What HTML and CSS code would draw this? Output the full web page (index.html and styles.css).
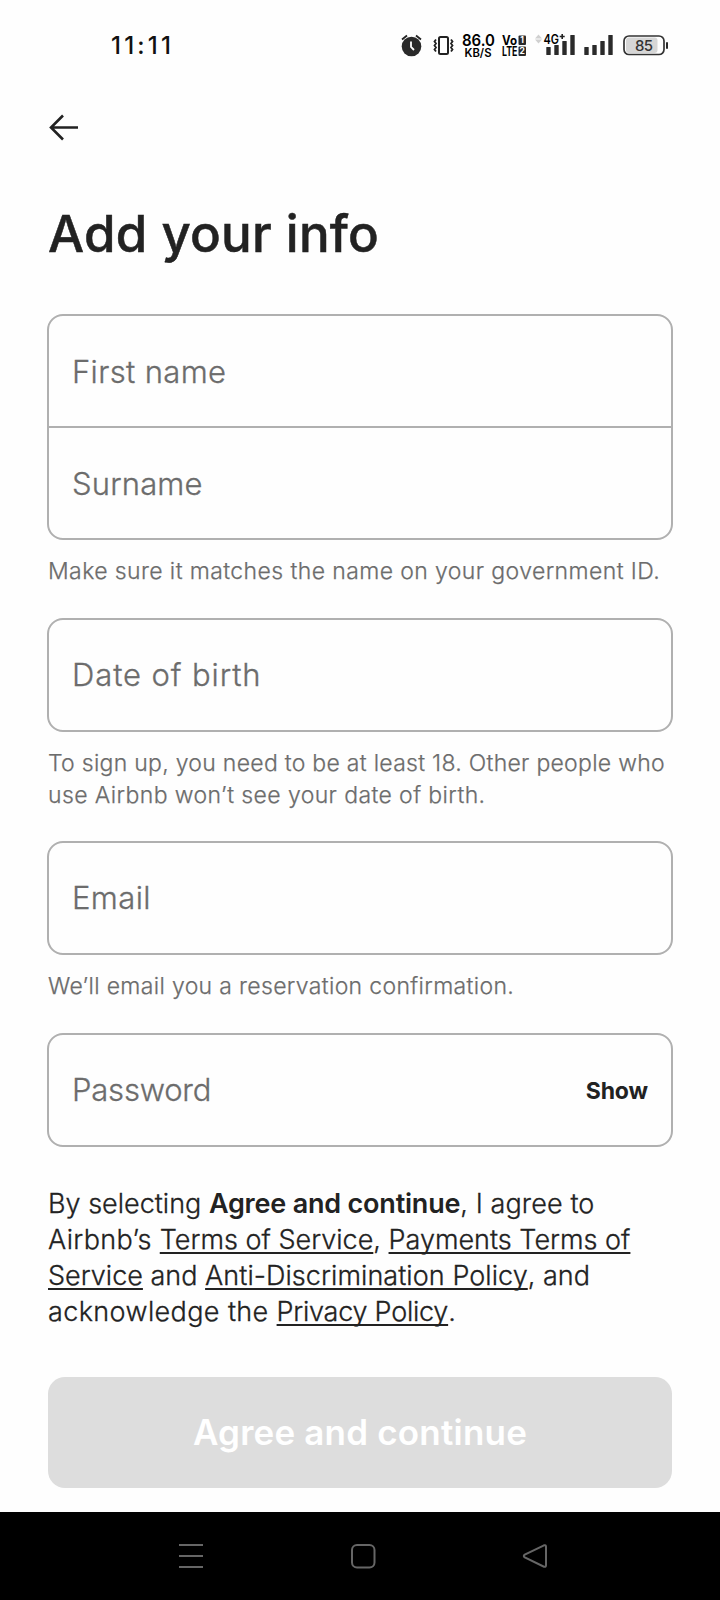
FILE: index.html
```html
<!DOCTYPE html>
<html lang="en">
<head>
<meta charset="utf-8">
<title>Add your info</title>
<link rel="stylesheet" href="styles.css">
</head>
<body>
<header class="status">
  <span class="clock">11:11</span>
  <svg class="status-icons" width="272" height="40" viewBox="398 25 272 40">
    <circle class="ink-fill" cx="411.500" cy="46.500" r="9.800"/>
    <path class="ink-line" stroke-width="1.800" d="M402 39.500l5-4M421 39.500l-5-4"/>
    <path d="M411 41.500v5.500l3 3" fill="none" stroke="#fff" stroke-width="1.800"/>
    <rect class="ink-line" stroke-width="2" x="439" y="37" width="9" height="17" rx="1.500"/>
    <path class="ink-line" stroke-width="1.800" d="M436 39.500l-1.500 2 1.500 2-1.500 2 1.500 2-1.500 2 1.500 2M451 39.500l1.500 2-1.500 2 1.500 2-1.500 2 1.500 2-1.500 2"/>
    <text class="rate" x="462" y="45.500" textLength="33" lengthAdjust="spacingAndGlyphs">86.0</text>
    <text class="unit" x="464.500" y="57" textLength="27" lengthAdjust="spacingAndGlyphs">KB/S</text>
    <text class="volte" x="502" y="45" textLength="15" lengthAdjust="spacingAndGlyphs">Vo</text>
    <text class="volte" x="502" y="55.500" textLength="15.500" lengthAdjust="spacingAndGlyphs">LTE</text>
    <rect class="ink-fill" x="518.500" y="35.500" width="7.500" height="9.500" rx="1"/>
    <rect class="ink-fill" x="518.500" y="46.500" width="7.500" height="9.500" rx="1"/>
    <text class="sim" x="520.300" y="43.400">1</text>
    <text class="sim" x="519.500" y="54.300">2</text>
    <path d="M538.500 34.500l3.500 4h-7zM538.500 43.500l3.500-4h-7z" fill="#d0d0d0"/>
    <text class="net" x="543.500" y="43.500" textLength="15.500" lengthAdjust="spacingAndGlyphs">4G</text>
    <path class="ink-line" stroke-width="1.600" d="M559.700 36.500h5M562.200 34v5"/>
    <g class="ink-fill">
      <rect x="546.300" y="47" width="4.400" height="8" rx=".5"/>
      <rect x="554.300" y="45" width="4.400" height="10" rx=".5"/>
      <rect x="562.300" y="41" width="4.400" height="14" rx=".5"/>
      <rect x="570.300" y="35" width="4.400" height="20" rx=".5"/>
      <rect x="584.300" y="47" width="4.400" height="8" rx=".5"/>
      <rect x="592.300" y="45" width="4.400" height="10" rx=".5"/>
      <rect x="600.300" y="41" width="4.400" height="14" rx=".5"/>
      <rect x="608.300" y="35" width="4.400" height="20" rx=".5"/>
      <rect x="666" y="42" width="2" height="7" rx="1"/>
    </g>
    <rect x="626" y="37.500" width="31.500" height="15.500" rx="3" fill="#d6d6d6"/>
    <rect x="624" y="36" width="40" height="18.500" rx="5" fill="none" stroke="#333" stroke-width="1.700"/>
    <text class="charge" x="635" y="51" textLength="18">85</text>
  </svg>
</header>
<main class="page">
  <button class="back" aria-label="Back">
    <svg width="30" height="28" viewBox="0 0 30 28"><path d="M29 14.500H2M14 2.500L2 14.500 14 26.500" fill="none" stroke="#222" stroke-width="2.600"/></svg>
  </button>
  <h1 class="title">Add your info</h1>

  <div class="box">
    <div class="field"><span class="ph first">First name</span></div>
    <div class="field"><span class="ph surname">Surname</span></div>
  </div>
  <p class="hint hint-name">Make sure it matches the name on your government ID.</p>

  <div class="box">
    <div class="field"><span class="ph birth">Date of birth</span></div>
  </div>
  <p class="hint hint-birth"><span class="line">To sign up, you need to be at least 18. Other people who</span> <span class="line looser">use Airbnb won’t see your date of birth.</span></p>

  <div class="box">
    <div class="field"><span class="ph email">Email</span></div>
  </div>
  <p class="hint hint-email">We’ll email you a reservation confirmation.</p>

  <div class="box">
    <div class="field"><span class="ph password">Password</span><span class="show">Show</span></div>
  </div>

  <p class="terms">
    <span class="line">By selecting <b>Agree and continue</b><span class="after">, I agree to</span></span>
    <span class="line"><span class="wide">Airbnb’s </span><a>Terms of Service</a>, <a>Payments Terms of</a></span>
    <span class="line"><a>Service</a> and <a class="policy">Anti-Discrimination Policy</a>, and</span>
    <span class="line"><span class="wide">acknowledge the </span><a class="privacy">Privacy Policy</a>.</span>
  </p>
  <button class="submit">Agree and continue</button>
</main>
<nav class="nav">
  <svg width="26" height="26" viewBox="0 0 26 26"><path d="M1 2h24M1 13h24M1 24h24"/></svg>
  <svg width="26" height="26" viewBox="0 0 26 26"><rect x="2" y="2" width="22.500" height="22.500" rx="5"/></svg>
  <svg width="26" height="26" viewBox="0 0 26 26"><path d="M22 2.300L2.800 11.600q-2 1.400 0 2.800L22 23.700q2 .6 2-1.500V3.800q0-2.100-2-1.500z"/></svg>
</nav>
</body>
</html>
```
FILE: styles.css
```css
* { box-sizing: border-box; }

body {
  margin: 0;
  width: 720px;
  height: 1600px;
  display: flex;
  flex-direction: column;
  background: #fefefe;
  color: #222;
  font-family: Inter, "Liberation Sans", sans-serif;
}

button { border: 0; padding: 0; font: inherit; background: none; }

.status {
  height: 90px;
  padding: 25px 50px 0 111px;
  display: flex;
  justify-content: space-between;
  align-items: flex-start;
}
.clock { font-size: 24px; line-height: 42px; font-weight: 500; letter-spacing: 3.200px; color: #111; }
.status-icons { display: block; }
.ink-fill { fill: #2a2a2a; }
.ink-line { fill: none; stroke: #222; }
.rate { font-size: 16px; font-weight: 600; }
.unit { font-size: 11.500px; font-weight: 600; }
.volte { font-size: 12.500px; font-weight: 700; }
.sim { font-size: 8.500px; font-weight: 700; fill: #fff; }
.net { font-size: 13px; font-weight: 600; }
.charge { font-size: 15px; font-weight: 500; fill: #333; }

.page { flex: 1; padding: 0 47px; display: flex; flex-direction: column; }
.back { align-self: flex-start; width: 30px; height: 28px; margin: 23px 0 0 2px; display: flex; }
.title {
  margin: 62px 0 50px 1px;
  font-size: 51px;
  line-height: 61px;
  font-weight: 500;
  letter-spacing: 0.250px;
  -webkit-text-stroke: 0.500px;
}

.box { border: 2px solid #b0b0b0; border-radius: 16px; }
.field {
  height: 110px;
  padding: 0 23px;
  display: flex;
  align-items: center;
  justify-content: space-between;
}
.field + .field { height: 112px; border-top: 2px solid #b0b0b0; }
.ph { font-size: 31px; font-weight: 300; color: #6c6c6c; -webkit-text-stroke: 0.300px; }
.first { letter-spacing: 0.350px; }
.surname { letter-spacing: 0.150px; }
.birth { letter-spacing: 0.900px; }
.email { letter-spacing: 0.400px; }
.password { letter-spacing: -0.200px; }
.birth, .email, .password { margin-top: -2px; }
.show { font-size: 23px; font-weight: 700; letter-spacing: -0.100px; padding-top: 1px; }

.line { display: block; white-space: nowrap; }
.hint {
  margin: 15px 0 31px 1px;
  font-size: 23px;
  line-height: 32px;
  font-weight: 300;
  color: #6c6c6c;
  white-space: nowrap;
  -webkit-text-stroke: 0.250px;
}
.hint-name { letter-spacing: 0.400px; }
.hint-birth { margin-bottom: 30px; letter-spacing: 0.280px; }
.looser { letter-spacing: 0.400px; }
.hint-email { letter-spacing: 0.340px; }

.terms {
  margin: 39px 0 47px 1px;
  font-size: 27px;
  line-height: 36px;
  font-weight: 300;
  -webkit-text-stroke: 0.300px;
}
.terms b { font-weight: 600; letter-spacing: -0.200px; -webkit-text-stroke: 0; }
.terms a { text-decoration: underline; text-decoration-thickness: 2px; text-underline-offset: 3px; text-decoration-skip-ink: none; }
.wide { letter-spacing: 0.380px; }
.after { letter-spacing: 0.100px; }
.policy { letter-spacing: 0.060px; }
.privacy { letter-spacing: -0.250px; }

.submit {
  height: 111px;
  margin: 0 1px;
  padding-bottom: 2px;
  border-radius: 17px;
  background: #ddd;
  color: #fff;
  font-size: 35px;
  font-weight: 600;
  letter-spacing: 0.200px;
}

.nav {
  height: 88px;
  padding: 0 172px 0 178px;
  display: flex;
  align-items: center;
  justify-content: space-between;
  background: #000;
}
.nav svg { fill: none; stroke: #666; stroke-width: 2; }
```
